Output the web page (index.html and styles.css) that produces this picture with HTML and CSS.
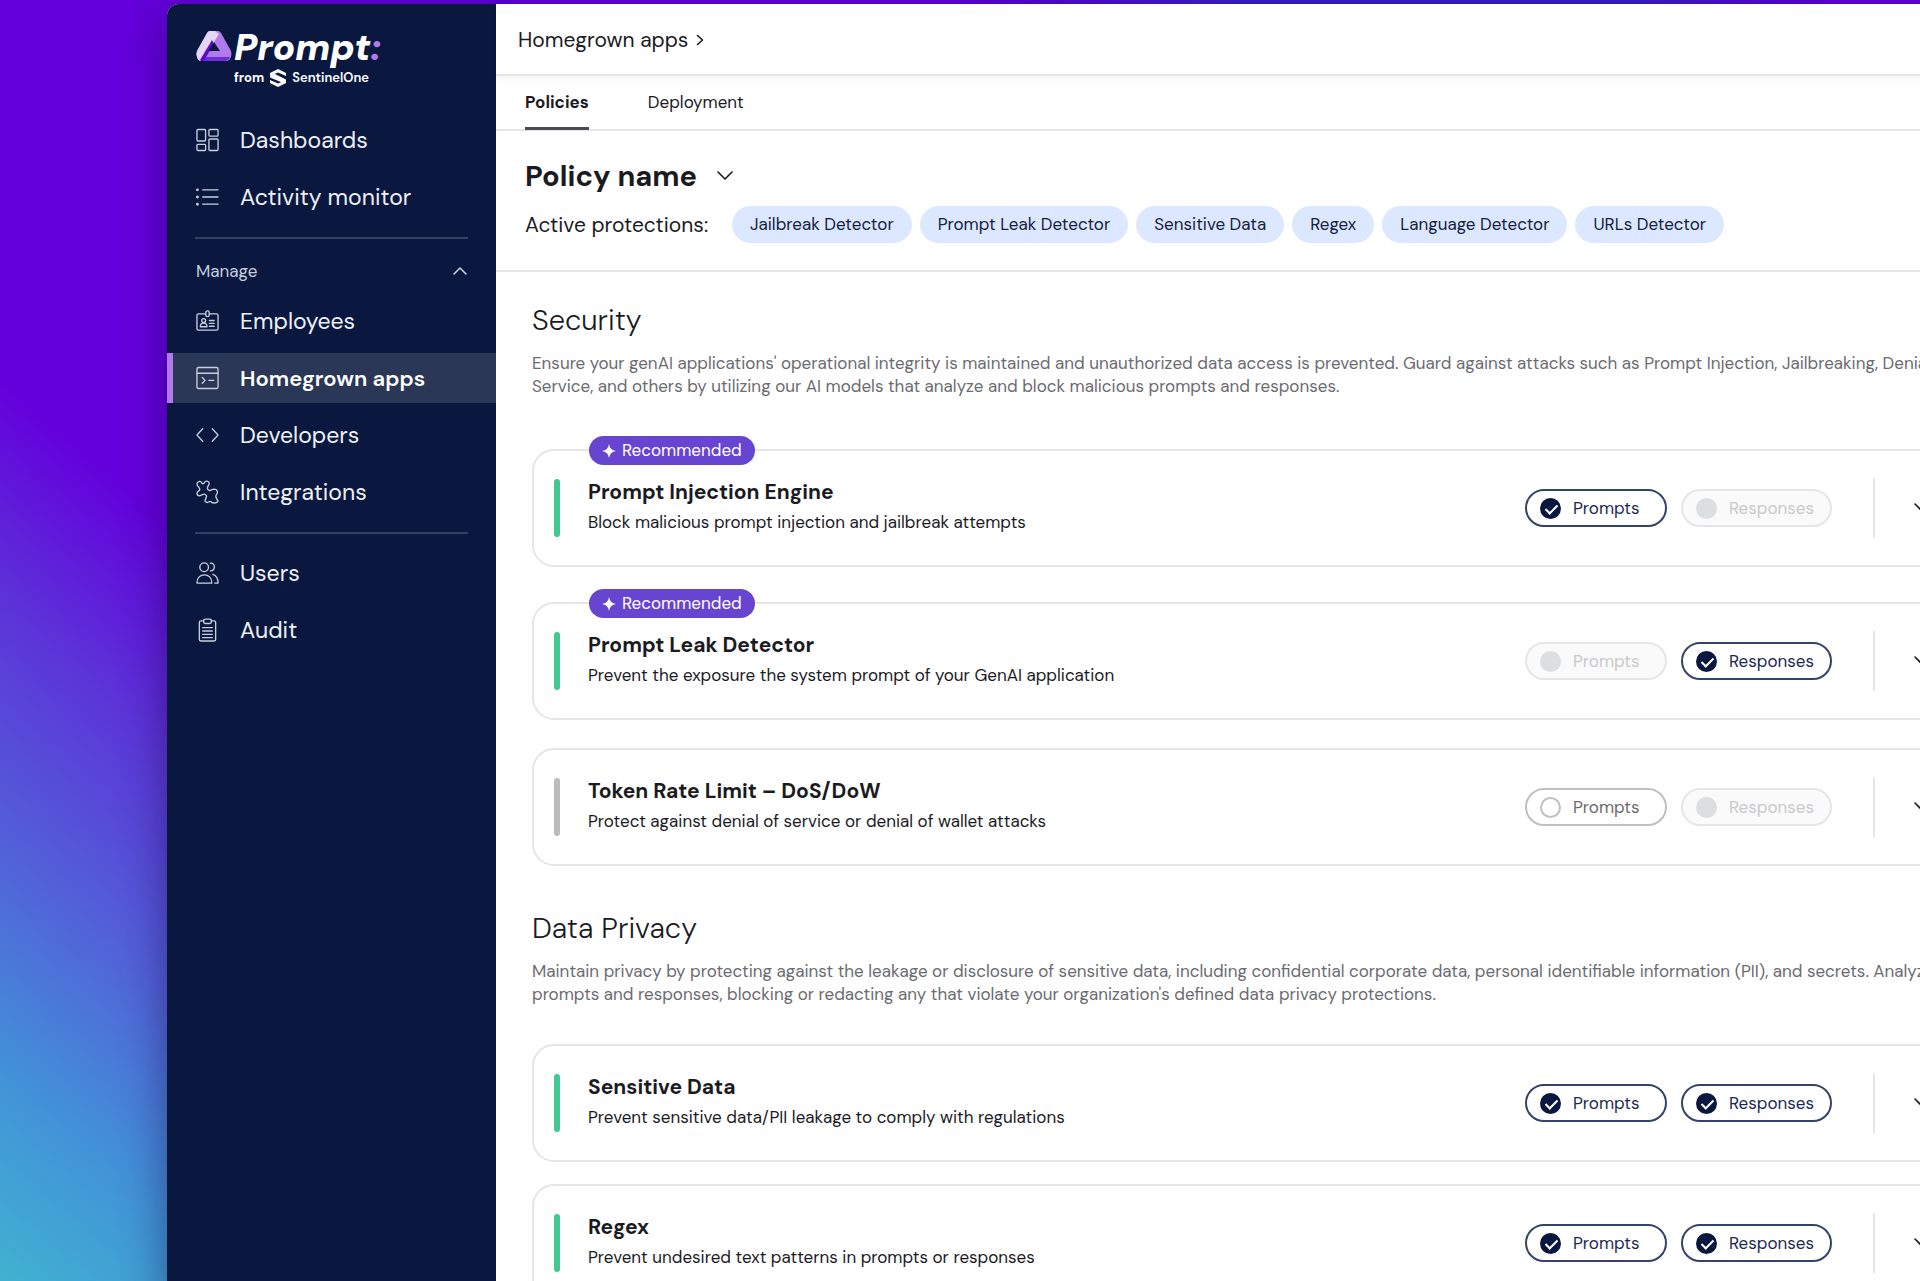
FILE: index.html
```html
<!DOCTYPE html>
<html lang="en">
<head>
  <meta charset="UTF-8">
  <meta name="viewport" content="width=device-width, initial-scale=1">
  <title>Homegrown apps - Policies</title>
  <link rel="stylesheet" href="styles.css">
</head>
<body>
  <div class="window">
    <aside class="sidebar">
      <a class="logo" href="#" aria-label="Prompt from SentinelOne">
        <svg class="logo-mark" viewBox="0 0 36 32">
          <path d="M14 1h8q2 0 3 2l10 18q1 3 0 6t-4 4H5q-3 0-4-4t0-6L11 3q1-2 3-2z" fill="#b07aec"/>
          <path d="M14 1h5l4 3-5 8-10 17-3 2q-3 0-4-4t0-6L11 3q1-2 3-2z" fill="#e6d5fa"/>
          <path d="M8 27h26l-1 2-3 2H6z" fill="#6f2fd6"/>
          <path d="M16 10l2 4-5 8-5 9H5l-1-1z" fill="#5a0cc8"/>
          <path d="M18 12l6 9H12.500z" fill="#0a183f"/>
        </svg>
        <span class="logo-text">
          <span class="logo-name">Prompt<span class="logo-colon">:</span></span>
          <span class="logo-from">from
            <svg class="s1-mark" viewBox="0 0 16 18">
              <path d="M8 0l8 4v3L8 3.500 0 7V4zM0 7l5-2 11 5.500V12l-4 1.500L0 8.500zM8 18l-8-4v-3l8 3.500L16 11v3z" fill="#fff"/>
            </svg>
            <span class="logo-s1">SentinelOne</span></span>
        </span>
      </a>

      <nav class="nav">
        <a class="nav-item" href="#">
          <svg class="icon" viewBox="0 0 24 24"><rect x="1" y="1" width="9" height="12" rx="1"/><rect x="13.500" y="1" width="9.500" height="7" rx="1"/><rect x="1" y="16.500" width="9" height="6.500" rx="1"/><rect x="13.500" y="11" width="9.500" height="12" rx="1"/></svg>
          Dashboards
        </a>
        <a class="nav-item" href="#">
          <svg class="icon" viewBox="0 0 24 24"><path d="M7 4.500h16M7 12h16M7 19.500h16"/><path class="dots" d="M1.500 4.500h.01M1.500 12h.01M1.500 19.500h.01"/></svg>
          Activity monitor
        </a>
        <hr class="nav-line">
        <button class="nav-group" type="button">Manage
          <svg class="chevron" viewBox="0 0 16 10"><path d="M2 8l6-6 6 6"/></svg>
        </button>
        <a class="nav-item" href="#">
          <svg class="icon" viewBox="0 0 24 24"><path d="M10 4.500H2.500A1.500 1.500 0 0 0 1 6v14a1.500 1.500 0 0 0 1.500 1.500h19A1.500 1.500 0 0 0 23 20V6a1.500 1.500 0 0 0-1.500-1.500H14"/><rect x="10.200" y="1.500" width="3.600" height="6" rx="1.800"/><circle cx="8" cy="11.500" r="2"/><path d="M4.500 18c0-5 7-5 7 0zM14 11.500h5M14 14.500h5M14 17.500h5"/></svg>
          Employees
        </a>
        <a class="nav-item active" href="#">
          <svg class="icon" viewBox="0 0 24 24"><rect x="1" y="1" width="22" height="22" rx="1.500"/><path d="M1 7h22M6.500 11.500l3 3-3 3M13.500 14.500h5"/></svg>
          Homegrown apps
        </a>
        <a class="nav-item" href="#">
          <svg class="icon" viewBox="0 0 24 24"><path d="M7 5.500L1 12l6 6.500M17 5.500l6 6.500-6 6.500"/></svg>
          Developers
        </a>
        <a class="nav-item" href="#">
          <svg class="icon" viewBox="0 0 24 24"><path d="M2 6Q1 5 1 3.500T3.500 1Q5.500.800 6 2.500T8.500 2.500Q9.500.500 11.500.700T13.800 3Q13.900 4.300 12.800 5.500T12 8.500Q13 11 15 10.200T18.500 9Q21.500 9 22.200 11T21.500 14.500Q20 16 21 17.800T23 21.500Q22 23.500 19 23.500T15.500 22Q14.500 21.500 13 22.500T9.600 22Q9 21 10 19.500T11 16Q9.500 13.500 7.500 14.500T3.500 16Q1 15.500 1 13.500T3 10.800Q4.300 10 3.800 8.500T2 6z"/></svg>
          Integrations
        </a>
        <hr class="nav-line">
        <a class="nav-item" href="#">
          <svg class="icon" viewBox="0 0 24 24"><circle cx="8.500" cy="6" r="4.500"/><path d="M1 22.500C.500 11 17 11 16.500 22.500zM15 1.800c5.500-.8 5.500 8.400 0 8M17.500 13.500c3.500 1 5.500 4.500 5.500 9h-3.500"/></svg>
          Users
        </a>
        <a class="nav-item" href="#">
          <svg class="icon" viewBox="0 0 24 24"><path d="M8 2.500H5A1.500 1.500 0 0 0 3.500 4v18A1.500 1.500 0 0 0 5 23.500h14a1.500 1.500 0 0 0 1.500-1.500V4A1.500 1.500 0 0 0 19 2.500h-3"/><rect x="8" y=".700" width="8" height="4.500" rx="1.500"/><path d="M7 9.500h10M7 13h10M7 16.500h10M7 20h10"/></svg>
          Audit
        </a>
      </nav>
    </aside>

    <main class="main">
      <div class="topbar">
        <span>Homegrown apps</span>
        <svg class="crumb" viewBox="0 0 8 12"><path d="M1.500 1.500L6.500 6l-5 4.500"/></svg>
      </div>
      <div class="tabs">
        <a class="tab selected" href="#">Policies</a>
        <a class="tab" href="#">Deployment</a>
      </div>

      <div class="policy">
        <h1><button class="policy-name" type="button">Policy name
          <svg class="chevron" viewBox="0 0 16 10"><path d="M1 1l7 7 7-7"/></svg></button></h1>
        <div class="protections">
          <span class="protections-label">Active protections:</span>
          <span class="chip">Jailbreak Detector</span>
          <span class="chip">Prompt Leak Detector</span>
          <span class="chip">Sensitive Data</span>
          <span class="chip">Regex</span>
          <span class="chip">Language Detector</span>
          <span class="chip">URLs Detector</span>
        </div>
      </div>

      <div class="content">
        <section class="section security">
          <h2>Security</h2>
          <p class="intro">Ensure your genAI applications' operational integrity is maintained and unauthorized data access is prevented. Guard against attacks such as Prompt Injection, Jailbreaking, Denial of<br>Service, and others by utilizing our AI models that analyze and block malicious prompts and responses.</p>
          <div class="cards">
            <article class="card recommended">
              <span class="badge"><svg class="star" viewBox="0 0 14 14"><path d="M7 0q.8 6.200 7 7-6.200.8-7 7-.8-6.200-7-7 6.200-.8 7-7z"/></svg>Recommended</span>
              <span class="bar"></span>
              <div class="card-text">
                <h3>Prompt Injection Engine</h3>
                <p>Block malicious prompt injection and jailbreak attempts</p>
              </div>
              <label class="toggle prompts"><input type="checkbox" checked>Prompts</label>
              <label class="toggle responses"><input type="checkbox" disabled>Responses</label>
              <button class="expand" type="button" aria-label="Expand"><svg class="chevron" viewBox="0 0 16 10"><path d="M1 1l7 7 7-7"/></svg></button>
            </article>
            <article class="card recommended">
              <span class="badge"><svg class="star" viewBox="0 0 14 14"><path d="M7 0q.8 6.200 7 7-6.200.8-7 7-.8-6.200-7-7 6.200-.8 7-7z"/></svg>Recommended</span>
              <span class="bar"></span>
              <div class="card-text">
                <h3>Prompt Leak Detector</h3>
                <p>Prevent the exposure the system prompt of your GenAI application</p>
              </div>
              <label class="toggle prompts"><input type="checkbox" disabled>Prompts</label>
              <label class="toggle responses"><input type="checkbox" checked>Responses</label>
              <button class="expand" type="button" aria-label="Expand"><svg class="chevron" viewBox="0 0 16 10"><path d="M1 1l7 7 7-7"/></svg></button>
            </article>
            <article class="card">
              <span class="bar off"></span>
              <div class="card-text">
                <h3>Token Rate Limit – DoS/DoW</h3>
                <p>Protect against denial of service or denial of wallet attacks</p>
              </div>
              <label class="toggle prompts"><input type="checkbox">Prompts</label>
              <label class="toggle responses"><input type="checkbox" disabled>Responses</label>
              <button class="expand" type="button" aria-label="Expand"><svg class="chevron" viewBox="0 0 16 10"><path d="M1 1l7 7 7-7"/></svg></button>
            </article>
          </div>
        </section>

        <section class="section">
          <h2>Data Privacy</h2>
          <p class="intro">Maintain privacy by protecting against the leakage or disclosure of sensitive data, including confidential corporate data, personal identifiable information (PII), and secrets. Analyze<br>prompts and responses, blocking or redacting any that violate your organization's defined data privacy protections.</p>
          <div class="cards">
            <article class="card">
              <span class="bar"></span>
              <div class="card-text">
                <h3>Sensitive Data</h3>
                <p>Prevent sensitive data/PII leakage to comply with regulations</p>
              </div>
              <label class="toggle prompts"><input type="checkbox" checked>Prompts</label>
              <label class="toggle responses"><input type="checkbox" checked>Responses</label>
              <button class="expand" type="button" aria-label="Expand"><svg class="chevron" viewBox="0 0 16 10"><path d="M1 1l7 7 7-7"/></svg></button>
            </article>
            <article class="card">
              <span class="bar"></span>
              <div class="card-text">
                <h3>Regex</h3>
                <p>Prevent undesired text patterns in prompts or responses</p>
              </div>
              <label class="toggle prompts"><input type="checkbox" checked>Prompts</label>
              <label class="toggle responses"><input type="checkbox" checked>Responses</label>
              <button class="expand" type="button" aria-label="Expand"><svg class="chevron" viewBox="0 0 16 10"><path d="M1 1l7 7 7-7"/></svg></button>
            </article>
          </div>
        </section>
      </div>
    </main>
  </div>
</body>
</html>
```

FILE: styles.css
```css
* {
  box-sizing: border-box;
}

body {
  font-family: "DM Sans", Inter, "Open Sans", sans-serif;
  font-size: 17px;
  color: #1b1b1f;
  margin: 0;
  height: 100vh;
  overflow: hidden;
  background:
    linear-gradient(90deg, transparent 50%, #3a22c8 65%, #3a22c8 85%, transparent 95%),
    linear-gradient(40deg, #40b2d0 0, #4292d8 160px, #5262d8 330px, #5c34d8 520px, #6400dc 690px);
}

a {
  color: inherit;
  text-decoration: none;
}

button {
  font: inherit;
  color: inherit;
  background: none;
  border: none;
  padding: 0;
  cursor: pointer;
}

h1, h2, h3, p {
  margin: 0;
}

svg {
  fill: none;
  stroke-linecap: round;
  stroke-linejoin: round;
  flex: none;
}

/* the window runs past the right and bottom edges */
.window {
  display: flex;
  min-height: 100vh;
  margin: 4px -78px 0 167px;
  border-radius: 12px 0 0 0;
  box-shadow: 0 10px 45px rgba(20, 0, 60, 0.45);
  background-color: #fff;
}

/* Sidebar */
.sidebar {
  flex: none;
  width: 329px;
  background-color: #0a183f;
  border-radius: 12px 0 0 0;
  color: #eef0f6;
}

.logo {
  display: flex;
  height: 111px;
  padding: 24px 0 0 29px;
  color: #fff;
}

.logo-mark {
  width: 36px;
  height: 32px;
  margin-top: 2px;
}

.logo-text {
  display: flex;
  flex-direction: column;
  padding-left: 2px;
}

.logo-name {
  font-size: 37px;
  font-weight: 900;
  font-style: italic;
  line-height: 38px;
}

.logo-colon {
  color: #b07aec;
}

.logo-from {
  display: flex;
  align-items: center;
  gap: 6px;
  font-size: 13px;
  font-weight: 700;
  line-height: 24px;
}

.s1-mark {
  width: 16px;
  height: 18px;
}

.logo-s1 {
  font-weight: 600;
}

.nav {
  display: flex;
  flex-direction: column;
  gap: 7px;
}

.nav-item {
  display: flex;
  align-items: center;
  gap: 21px;
  height: 50px;
  padding-left: 29px;
  font-size: 23px;
}

.nav-item.active {
  padding-left: 23px;
  border-left: 6px solid #b07aec;
  background-color: #2b3756;
  color: #fff;
  font-size: 22px;
  font-weight: 600;
}

.icon {
  width: 23px;
  height: 24px;
  stroke: #c9cede;
  stroke-width: 1.4;
}

.dots {
  stroke-width: 3;
}

.nav-line {
  width: 273px;
  height: 2px;
  margin: 8px 28px 7px;
  border: none;
  background-color: #33405f;
}

.nav-group {
  display: flex;
  align-items: center;
  justify-content: space-between;
  height: 24px;
  margin: 6px 28px 6px 29px;
  font-size: 17px;
  color: #c9cede;
}

.chevron {
  width: 16px;
  height: 10px;
  stroke: currentColor;
  stroke-width: 1.6;
}

/* Main area */
.main {
  flex: 1;
  min-width: 0;
}

.topbar {
  display: flex;
  align-items: center;
  gap: 8px;
  height: 72px;
  padding: 2px 0 0 22px;
  border-bottom: 2px solid #e6e6e8;
  box-shadow: 0 2px 8px rgba(0, 0, 0, 0.06);
  font-size: 21px;
}

.crumb {
  width: 8px;
  height: 12px;
  stroke: #1b1b1f;
  stroke-width: 1.6;
}

.tabs {
  display: flex;
  gap: 59px;
  height: 55px;
  padding-left: 29px;
  border-bottom: 2px solid #e6e6e8;
  line-height: 52px;
}

.tab.selected {
  height: 54px;
  border-bottom: 3px solid #4a4a50;
  font-weight: 700;
}

.policy {
  height: 141px;
  padding: 26px 0 0 29px;
  border-bottom: 2px solid #e6e6e8;
}

.policy-name {
  display: flex;
  align-items: center;
  gap: 20px;
  font-size: 29px;
  font-weight: 700;
  line-height: 38px;
}

.protections {
  display: flex;
  align-items: center;
  gap: 8px;
  margin-top: 11px;
}

.protections-label {
  width: 199px;
  font-size: 21px;
}

.chip {
  padding: 0 18px;
  border-radius: 19px;
  background-color: #dce8ff;
  color: #14213f;
  line-height: 37px;
}

.content {
  padding: 0 36px;
}

.section {
  padding-top: 28px;
}

.section + .section {
  padding-top: 42px;
}

.section h2 {
  font-size: 29px;
  font-weight: 300;
  line-height: 40px;
}

.intro {
  margin-top: 12px;
  color: #6b6b70;
  line-height: 23px;
  white-space: nowrap;
}

.cards {
  display: flex;
  flex-direction: column;
  gap: 22px;
  margin-top: 38px;
}

.security .cards {
  margin-top: 44px;
}

.card {
  display: flex;
  align-items: center;
  position: relative;
  height: 118px;
  padding: 0 30px 0 20px;
  border: 2px solid #e6e6e8;
  border-radius: 22px;
}

.card.recommended {
  margin: 7px 0 6px;
}

.badge {
  position: absolute;
  left: 55px;
  top: -15px;
  display: flex;
  align-items: center;
  gap: 6px;
  padding: 0 13px;
  border-radius: 15px;
  background-color: #6745d0;
  color: #fff;
  line-height: 29px;
}

.star {
  width: 14px;
  height: 14px;
  fill: #fff;
}

.bar {
  width: 6px;
  height: 58px;
  margin-right: 28px;
  border-radius: 3px;
  background-color: #42c795;
}

.bar.off {
  background-color: #bcbcbf;
}

.card-text {
  flex: 1;
  padding-bottom: 2px;
}

.card-text h3 {
  font-size: 21px;
  font-weight: 700;
  line-height: 30px;
}

.card-text p {
  line-height: 30px;
}

.toggle {
  display: flex;
  align-items: center;
  gap: 12px;
  height: 38px;
  margin-right: 14px;
  padding-left: 13px;
  border: 2px solid #bfc0c4;
  border-radius: 19px;
  color: #6b6b70;
}

.toggle.prompts {
  width: 142px;
}

.toggle.responses {
  width: 151px;
  margin-right: 41px;
}

.toggle:has(input:checked) {
  border-color: #34436a;
  color: #1c2a52;
}

.toggle:has(input:disabled) {
  border-color: #e6e6e8;
  background-color: #fafafa;
  color: #c9c9cc;
}

.toggle input {
  appearance: none;
  position: relative;
  width: 21px;
  height: 21px;
  margin: 0;
  border: 2px solid #bfc0c4;
  border-radius: 50%;
}

.toggle input:checked {
  border-color: #0a183f;
  background-color: #0a183f;
}

.toggle input:disabled {
  border-color: #dddee0;
  background-color: #dddee0;
}

.toggle input:checked::after {
  content: "";
  position: absolute;
  left: 6px;
  top: 2px;
  width: 5px;
  height: 10px;
  border: solid #fff;
  border-width: 0 2px 2px 0;
  transform: rotate(45deg);
}

.expand {
  display: flex;
  align-items: center;
  height: 60px;
  padding-left: 39px;
  border-left: 2px solid #e6e6e8;
}
```
